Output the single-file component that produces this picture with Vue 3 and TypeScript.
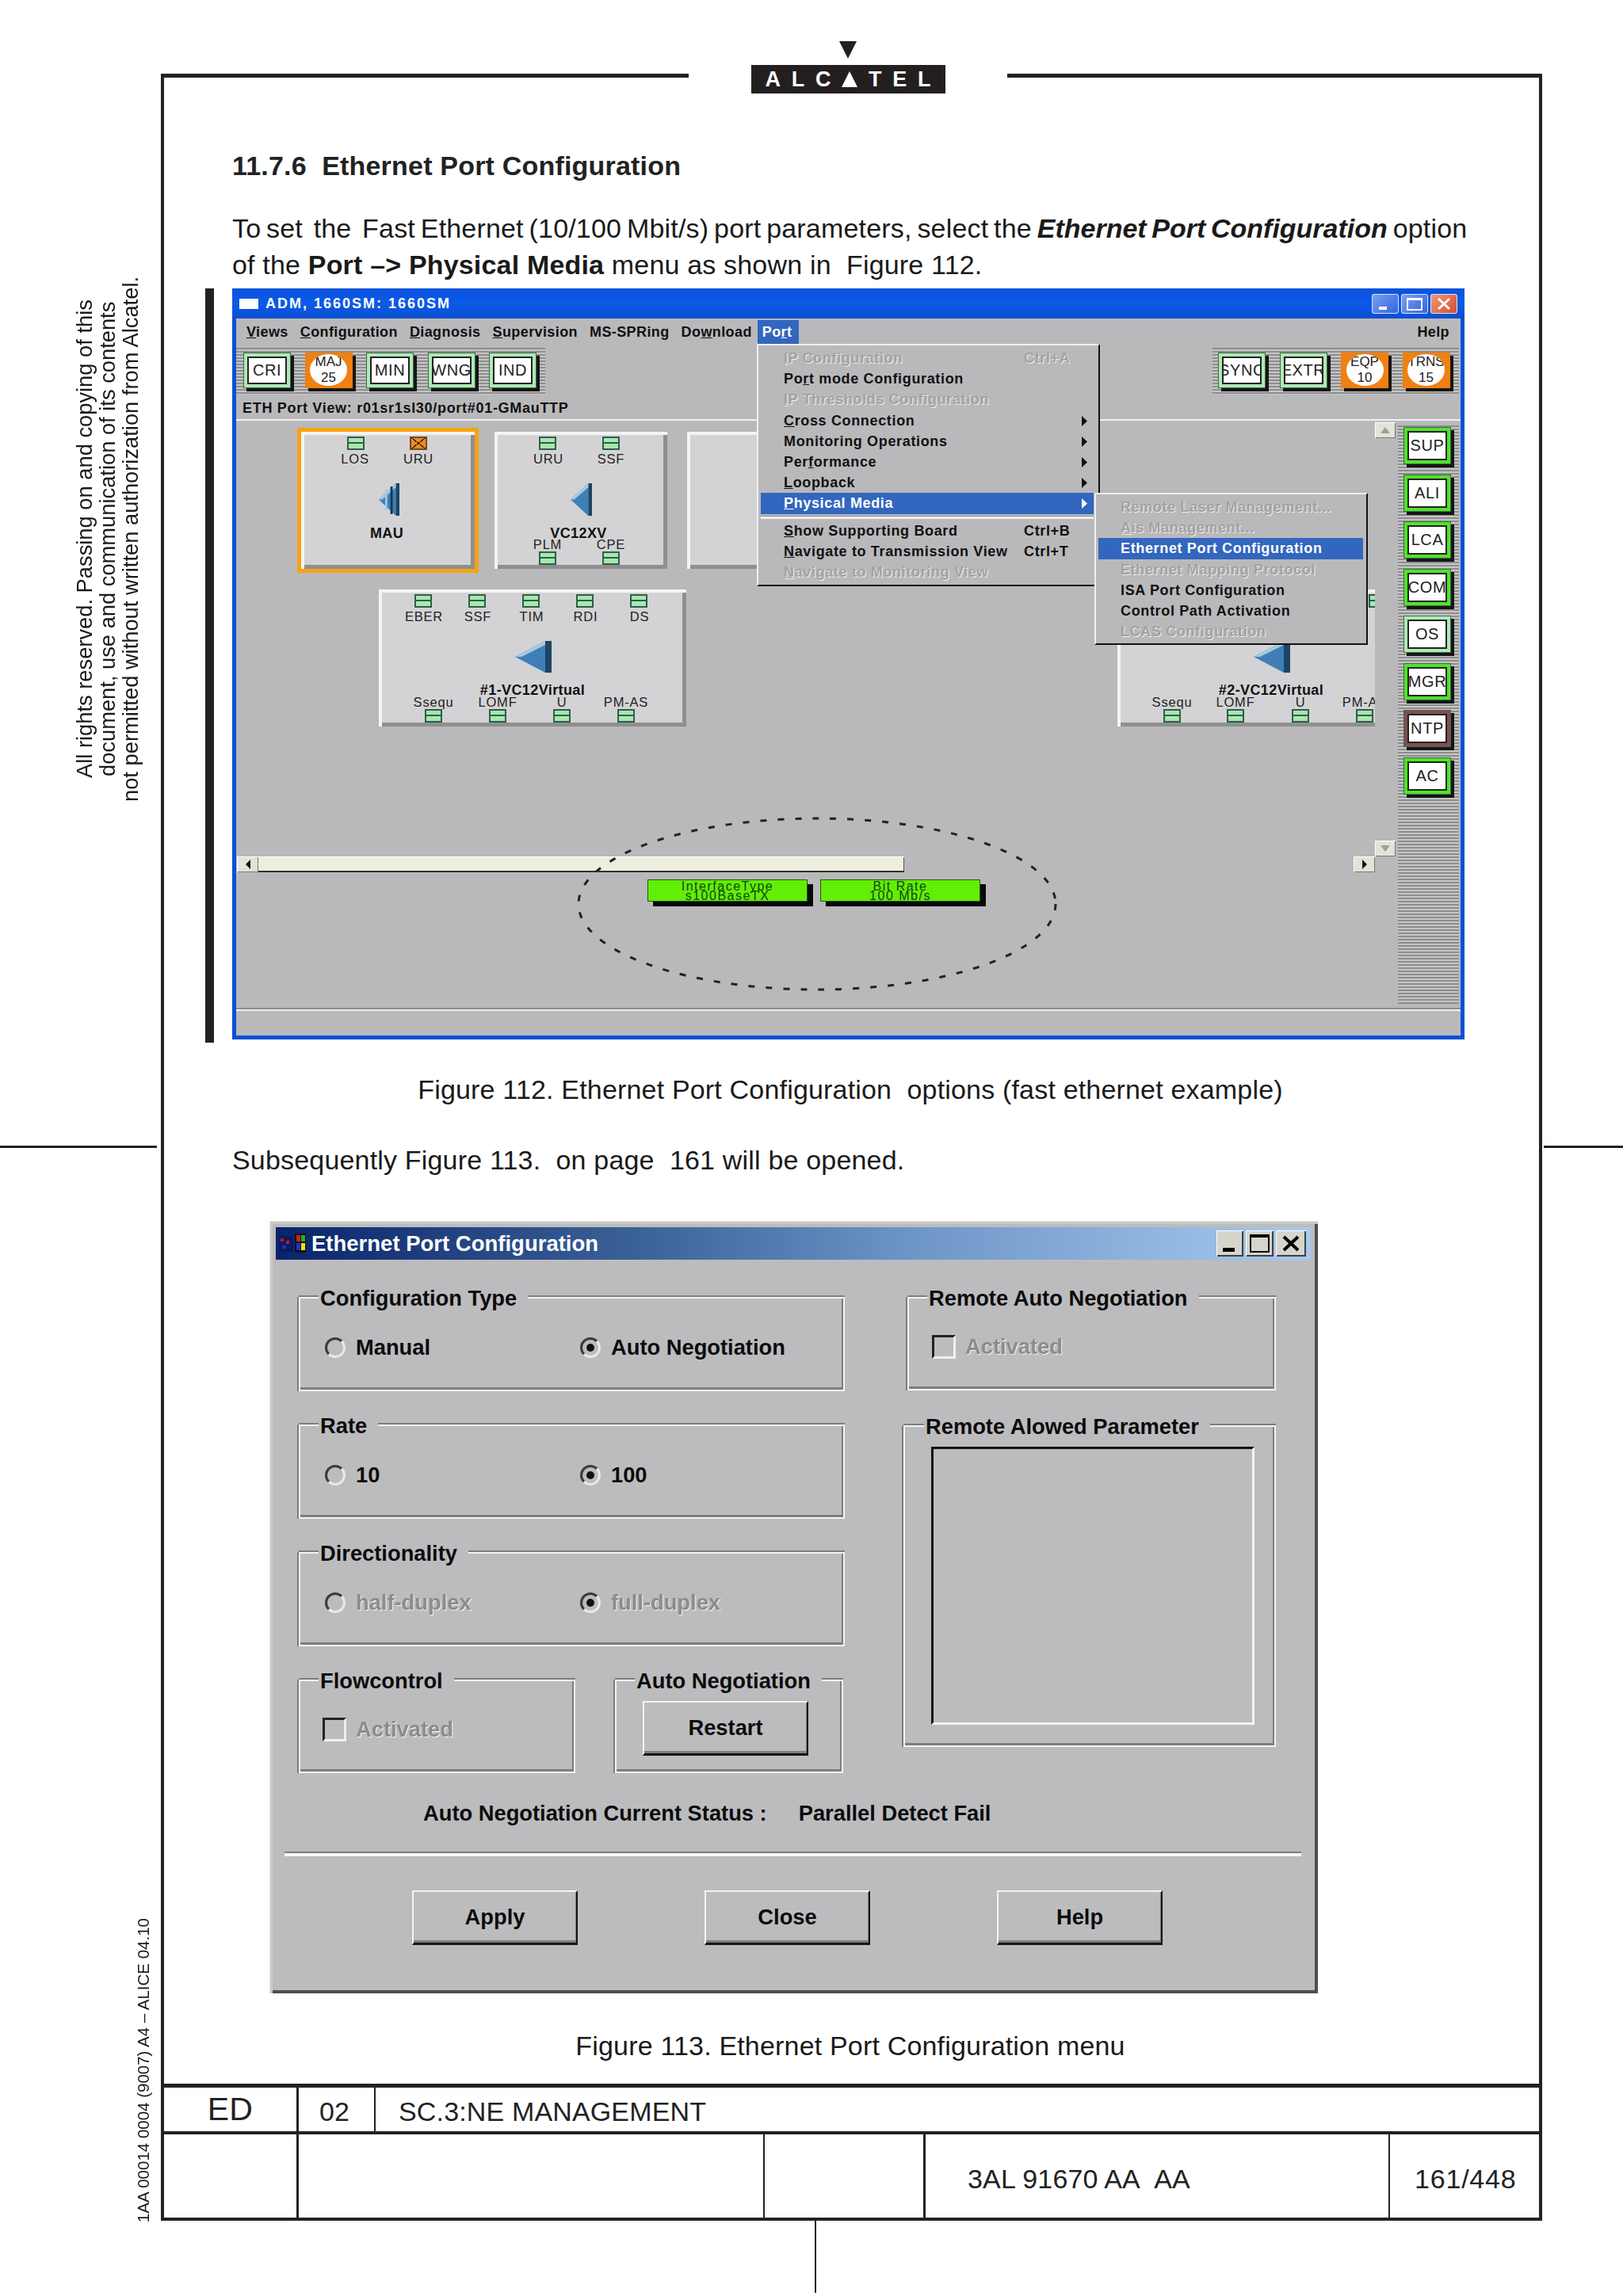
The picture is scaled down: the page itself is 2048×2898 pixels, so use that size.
<script setup lang="ts">
interface Tool {
  top: string
  bottom?: string
  tone: 'pale' | 'green' | 'brown' | 'alarm'
}

interface Lamp {
  x: number
  y: number
  alarm?: boolean
}

interface NodeText {
  t: string
  x: number
  y: number
  bold?: boolean
}

interface PortNode {
  x: number
  y: number
  w: number
  selected?: boolean
  arrow?: { x: number; y: number; w: number; h: number; stripes?: boolean }
  lamps: Lamp[]
  texts: NodeText[]
}

interface MenuRow {
  text: string
  u?: number
  key?: string
  sub?: boolean
  off?: boolean
  active?: boolean
  line?: boolean
}

const leftTools: Tool[] = [
  { top: 'CRI', tone: 'pale' },
  { top: 'MAJ', bottom: '25', tone: 'alarm' },
  { top: 'MIN', tone: 'pale' },
  { top: 'WNG', tone: 'pale' },
  { top: 'IND', tone: 'pale' },
]

const rightTools: Tool[] = [
  { top: 'SYNC', tone: 'pale' },
  { top: 'EXTR', tone: 'pale' },
  { top: 'EQP', bottom: '10', tone: 'alarm' },
  { top: 'TRNS', bottom: '15', tone: 'alarm' },
]

const sideTools: Tool[] = [
  { top: 'SUP', tone: 'green' },
  { top: 'ALI', tone: 'green' },
  { top: 'LCA', tone: 'green' },
  { top: 'COM', tone: 'green' },
  { top: 'OS', tone: 'pale' },
  { top: 'MGR', tone: 'green' },
  { top: 'NTP', tone: 'brown' },
  { top: 'AC', tone: 'green' },
]

const menuBar = [
  { text: 'Views', u: 0 },
  { text: 'Configuration', u: 0 },
  { text: 'Diagnosis', u: 0 },
  { text: 'Supervision', u: 0 },
  { text: 'MS-SPRing', u: -1 },
  { text: 'Download', u: 2 },
]

const portMenu: MenuRow[] = [
  { text: 'IP Configuration', u: 0, key: 'Ctrl+A', off: true },
  { text: 'Port mode Configuration', u: 2 },
  { text: 'IP Thresholds Configuration', u: 0, off: true },
  { text: 'Cross Connection', u: 0, sub: true },
  { text: 'Monitoring Operations', sub: true },
  { text: 'Performance', u: 3, sub: true },
  { text: 'Loopback', u: 0, sub: true },
  { text: 'Physical Media', u: 0, sub: true, active: true, line: true },
  { text: 'Show Supporting Board', u: 0, key: 'Ctrl+B' },
  { text: 'Navigate to Transmission View', u: 0, key: 'Ctrl+T' },
  { text: 'Navigate to Monitoring View', u: 0, off: true },
]

const mediaMenu: MenuRow[] = [
  { text: 'Remote Laser Management...', off: true },
  { text: 'Ais Management...', u: 0, off: true },
  { text: 'Ethernet Port Configuration', active: true },
  { text: 'Ethernet Mapping Protocol', off: true },
  { text: 'ISA Port Configuration' },
  { text: 'Control Path Activation' },
  { text: 'LCAS Configuration', off: true },
]

// coordinates below are page pixels, the viewport starts at 299,532
const nodes: PortNode[] = [
  {
    x: 381,
    y: 546,
    w: 219,
    selected: true,
    arrow: { x: 479, y: 611, w: 26, h: 41, stripes: true },
    lamps: [
      { x: 450, y: 552 },
      { x: 529, y: 552, alarm: true },
    ],
    texts: [
      { t: 'LOS', x: 449, y: 580 },
      { t: 'URU', x: 529, y: 580 },
      { t: 'MAU', x: 489, y: 674, bold: true },
    ],
  },
  {
    x: 625,
    y: 546,
    w: 218,
    arrow: { x: 721, y: 611, w: 27, h: 41 },
    lamps: [
      { x: 692, y: 552 },
      { x: 772, y: 552 },
      { x: 692, y: 697 },
      { x: 772, y: 697 },
    ],
    texts: [
      { t: 'URU', x: 693, y: 580 },
      { t: 'SSF', x: 772, y: 580 },
      { t: 'VC12XV', x: 731, y: 674, bold: true },
      { t: 'PLM', x: 692, y: 688 },
      { t: 'CPE', x: 772, y: 688 },
    ],
  },
  { x: 868, y: 546, w: 218, lamps: [], texts: [] },
  {
    x: 479,
    y: 745,
    w: 388,
    arrow: { x: 651, y: 810, w: 46, h: 40 },
    lamps: [
      { x: 535, y: 751 },
      { x: 603, y: 751 },
      { x: 671, y: 751 },
      { x: 739, y: 751 },
      { x: 807, y: 751 },
      { x: 548, y: 896 },
      { x: 629, y: 896 },
      { x: 710, y: 896 },
      { x: 791, y: 896 },
    ],
    texts: [
      { t: 'EBER', x: 536, y: 779 },
      { t: 'SSF', x: 604, y: 779 },
      { t: 'TIM', x: 672, y: 779 },
      { t: 'RDI', x: 740, y: 779 },
      { t: 'DS', x: 808, y: 779 },
      { t: '#1-VC12Virtual', x: 673, y: 872, bold: true },
      { t: 'Ssequ', x: 548, y: 887 },
      { t: 'LOMF', x: 629, y: 887 },
      { t: 'U', x: 710, y: 887 },
      { t: 'PM-AS', x: 791, y: 887 },
    ],
  },
  {
    x: 1411,
    y: 745,
    w: 388,
    arrow: { x: 1583, y: 810, w: 46, h: 40 },
    lamps: [
      { x: 1739, y: 751 },
      { x: 1480, y: 896 },
      { x: 1560, y: 896 },
      { x: 1642, y: 896 },
      { x: 1723, y: 896 },
    ],
    texts: [
      { t: '#2-VC12Virtual', x: 1605, y: 872, bold: true },
      { t: 'Ssequ', x: 1480, y: 887 },
      { t: 'LOMF', x: 1560, y: 887 },
      { t: 'U', x: 1642, y: 887 },
      { t: 'PM-AS', x: 1723, y: 887 },
    ],
  },
]

const radioGroups = [
  { title: 'Configuration Type', a: 'Manual', b: 'Auto Negotiation', off: false },
  { title: 'Rate', a: '10', b: '100', off: false },
  { title: 'Directionality', a: 'half-duplex', b: 'full-duplex', off: true },
]

function parts(text: string, u = -1) {
  if (u < 0) return [text, '', '']
  return [text.slice(0, u), text.charAt(u), text.slice(u + 1)]
}

function nodeBox(n: PortNode) {
  return { left: `${n.x - 299}px`, top: `${n.y - 532}px`, width: `${n.w}px` }
}

function inNode(n: PortNode, x: number, y: number) {
  return { left: `${x - n.x}px`, top: `${y - n.y}px` }
}
</script>

<template>
  <div class="page">
    <aside class="margin-left">
      <div class="rights">
        All rights reserved. Passing on and copying of this<br />
        document, use and communication of its contents<br />
        not permitted without written authorization from Alcatel.
      </div>
      <div class="tick tick-left"></div>
      <div class="doc-id">1AA 00014 0004 (9007) A4 – ALICE 04.10</div>
    </aside>

    <div class="sheet">
      <div class="frame">
        <div class="logo">
          <svg width="22" height="22" viewBox="0 0 22 22"><polygon points="0,0 22,0 11,22" fill="#231f20" /></svg>
          <div class="logo-box">
            <span>A</span><span>L</span><span>C</span><i class="logo-tri"></i><span>T</span><span>E</span><span>L</span>
          </div>
        </div>

        <div class="content">
          <h2 class="heading">11.7.6&nbsp; Ethernet Port Configuration</h2>
          <p class="para">
            <span class="line-one">To set&nbsp; the&nbsp; Fast Ethernet (10/100 Mbit/s) port parameters, select the <b><i>Ethernet Port Configuration</i></b> option</span><br />
            of the <b>Port –&gt; Physical Media</b> menu as shown in&nbsp; Figure 112.
          </p>

          <div class="figure-row">
            <div class="change-bar"></div>
            <div class="xp-window">
              <div class="xp-title">
                <span class="xp-icon"></span>
                <span class="xp-caption">ADM, 1660SM: 1660SM</span>
                <span class="xp-btns">
                  <span class="xp-btn">
                    <svg width="34" height="25" viewBox="0 0 34 25"><rect x="9" y="16" width="10" height="4" fill="#fff" /></svg>
                  </span>
                  <span class="xp-btn">
                    <svg width="34" height="25" viewBox="0 0 34 25"><rect x="8" y="6" width="18" height="14" fill="none" stroke="#fff" stroke-width="2" /><rect x="8" y="5" width="18" height="3" fill="#fff" /></svg>
                  </span>
                  <span class="xp-btn xp-close">
                    <svg width="34" height="25" viewBox="0 0 34 25"><path d="M10 6 L24 19 M24 6 L10 19" stroke="#fff" stroke-width="3" /></svg>
                  </span>
                </span>
              </div>

              <div class="menubar">
                <span v-for="m in menuBar" :key="m.text" class="menu-item">{{ parts(m.text, m.u)[0] }}<u>{{ parts(m.text, m.u)[1] }}</u>{{ parts(m.text, m.u)[2] }}</span>
                <span class="menu-port">Po<u>r</u>t</span>
                <span class="menu-help">Help</span>
              </div>

              <div class="tool-row">
                <div class="tools tools-left">
                  <div v-for="b in leftTools" :key="b.top" class="tool" :class="b.tone">
                    <span class="tool-face">{{ b.top }}<template v-if="b.bottom"><br />{{ b.bottom }}</template></span>
                  </div>
                </div>
                <div class="tools tools-right">
                  <div v-for="b in rightTools" :key="b.top" class="tool" :class="b.tone">
                    <span class="tool-face">{{ b.top }}<template v-if="b.bottom"><br />{{ b.bottom }}</template></span>
                  </div>
                </div>
              </div>

              <div class="view-label">ETH Port View: r01sr1sl30/port#01-GMauTTP</div>

              <div class="work">
                <div class="canvas">
                  <div class="pane">
                    <div class="viewport">
                      <div
                        v-for="n in nodes"
                        :key="n.x"
                        class="node"
                        :class="{ selected: n.selected }"
                        :style="nodeBox(n)"
                      >
                        <span
                          v-for="l in n.lamps"
                          :key="`${l.x}-${l.y}`"
                          class="lamp"
                          :class="{ alarm: l.alarm }"
                          :style="inNode(n, l.x, l.y)"
                        ></span>
                        <span
                          v-for="t in n.texts"
                          :key="t.t"
                          class="node-text"
                          :class="{ bold: t.bold }"
                          :style="inNode(n, t.x, t.y)"
                          >{{ t.t }}</span
                        >
                        <svg
                          v-if="n.arrow"
                          class="arrow"
                          :style="inNode(n, n.arrow.x, n.arrow.y)"
                          :width="n.arrow.w"
                          :height="n.arrow.h"
                          viewBox="0 0 46 40"
                          preserveAspectRatio="none"
                        >
                          <polygon points="0,20 38,0 38,40" fill="#3f7fb5" />
                          <polygon points="38,0 46,0 46,40 38,40" fill="#1c4464" />
                          <polygon points="0,20 38,0 38,5 8,20" fill="#a8c8e0" />
                          <template v-if="n.arrow.stripes">
                            <rect x="14" y="8" width="5" height="25" fill="#a8c8e0" />
                            <rect x="26" y="4" width="5" height="34" fill="#17364f" />
                          </template>
                        </svg>
                      </div>
                    </div>
                    <div class="vscroll">
                      <span class="sbtn up">
                        <svg width="12" height="8" viewBox="0 0 12 8"><polygon points="6,0 12,8 0,8" fill="#a0a090" /></svg>
                      </span>
                      <span class="sbtn down">
                        <svg width="12" height="8" viewBox="0 0 12 8"><polygon points="0,0 12,0 6,8" fill="#a0a090" /></svg>
                      </span>
                    </div>
                  </div>

                  <div class="hscroll">
                    <span class="sbtn small">
                      <svg width="6" height="12" viewBox="0 0 6 12"><polygon points="6,0 6,12 0,6" fill="#111" /></svg>
                    </span>
                    <span class="thumb"></span>
                    <span class="sbtn small end">
                      <svg width="6" height="12" viewBox="0 0 6 12"><polygon points="0,0 6,6 0,12" fill="#111" /></svg>
                    </span>
                  </div>

                  <div class="chips">
                    <div class="chip">InterfaceType<br />s100BaseTX</div>
                    <div class="chip">Bit Rate<br />100 Mb/s</div>
                  </div>

                  <svg class="ring" width="620" height="230" viewBox="0 0 620 230">
                    <ellipse cx="310" cy="115" rx="301" ry="108" fill="none" stroke="#222" stroke-width="3" stroke-dasharray="8 14" />
                  </svg>
                </div>

                <div class="side-tools">
                  <div v-for="b in sideTools" :key="b.top" class="tool tall" :class="b.tone">
                    <span class="tool-face">{{ b.top }}</span>
                  </div>
                </div>
              </div>

              <div class="status"></div>

              <div class="popup port-menu">
                <template v-for="r in portMenu" :key="r.text">
                  <div class="row" :class="{ off: r.off, active: r.active }">
                    <span class="row-text">{{ parts(r.text, r.u)[0] }}<u>{{ parts(r.text, r.u)[1] }}</u>{{ parts(r.text, r.u)[2] }}</span>
                    <span v-if="r.key" class="row-key">{{ r.key }}</span>
                    <svg v-if="r.sub" class="row-sub" width="7" height="13" viewBox="0 0 7 13"><polygon points="0,0 7,6.5 0,13" :fill="r.active ? '#fff' : '#111'" /></svg>
                  </div>
                  <div v-if="r.line" class="row-line"></div>
                </template>
              </div>

              <div class="popup media-menu">
                <div v-for="r in mediaMenu" :key="r.text" class="row" :class="{ off: r.off, active: r.active }">
                  <span class="row-text">{{ parts(r.text, r.u)[0] }}<u>{{ parts(r.text, r.u)[1] }}</u>{{ parts(r.text, r.u)[2] }}</span>
                </div>
              </div>
            </div>
          </div>

          <p class="caption cap-112">Figure 112. Ethernet Port Configuration&nbsp; options (fast ethernet example)</p>
          <p class="para after">Subsequently Figure 113.&nbsp; on page&nbsp; 161 will be opened.</p>

          <div class="dialog">
            <div class="dlg-title">
              <svg class="dlg-icon" width="36" height="28" viewBox="0 0 36 28">
                <rect x="0" y="4" width="18" height="20" fill="#0a1a60" />
                <rect x="2" y="7" width="4" height="4" fill="#c01830" />
                <rect x="9" y="10" width="4" height="4" fill="#c01830" />
                <rect x="4" y="16" width="5" height="4" fill="#1830d0" />
                <rect x="20" y="1" width="14" height="24" fill="#101010" />
                <rect x="22" y="3" width="5" height="8" fill="#d02020" />
                <rect x="28" y="3" width="5" height="8" fill="#20b030" />
                <rect x="22" y="13" width="5" height="9" fill="#2030d0" />
                <rect x="28" y="13" width="5" height="9" fill="#f0e020" />
              </svg>
              <span class="dlg-caption">Ethernet Port Configuration</span>
              <span class="dlg-btns">
                <span class="dlg-btn">
                  <svg width="34" height="33" viewBox="0 0 34 33"><rect x="8" y="22" width="15" height="5" fill="#000" /></svg>
                </span>
                <span class="dlg-btn">
                  <svg width="35" height="33" viewBox="0 0 35 33"><rect x="6" y="6" width="23" height="21" fill="none" stroke="#000" stroke-width="2" /><rect x="6" y="5" width="23" height="4" fill="#000" /></svg>
                </span>
                <span class="dlg-btn">
                  <svg width="38" height="33" viewBox="0 0 38 33"><path d="M10 8 L28 25 M28 8 L10 25" stroke="#000" stroke-width="4" /></svg>
                </span>
              </span>
            </div>

            <div class="dlg-body">
              <div class="dlg-left">
                <div v-for="g in radioGroups" :key="g.title" class="group radio-group">
                  <span class="legend">{{ g.title }}</span>
                  <div class="radio-cell">
                    <span class="radio"></span>
                    <span class="opt" :class="{ off: g.off }">{{ g.a }}</span>
                  </div>
                  <div class="radio-cell">
                    <span class="radio on"></span>
                    <span class="opt" :class="{ off: g.off }">{{ g.b }}</span>
                  </div>
                </div>
                <div class="group-pair">
                  <div class="group flow">
                    <span class="legend">Flowcontrol</span>
                    <span class="check"></span>
                    <span class="opt off">Activated</span>
                  </div>
                  <div class="group restart">
                    <span class="legend">Auto Negotiation</span>
                    <button class="w-btn" type="button">Restart</button>
                  </div>
                </div>
              </div>

              <div class="dlg-right">
                <div class="group remote-auto">
                  <span class="legend">Remote Auto Negotiation</span>
                  <span class="check"></span>
                  <span class="opt off">Activated</span>
                </div>
                <div class="group remote-params">
                  <span class="legend">Remote Alowed Parameter</span>
                  <div class="listbox"></div>
                </div>
              </div>
            </div>

            <div class="dlg-status">
              <span>Auto Negotiation Current Status :</span>
              <span>Parallel Detect Fail</span>
            </div>
            <div class="dlg-divider"></div>
            <div class="dlg-actions">
              <button class="w-btn" type="button">Apply</button>
              <button class="w-btn" type="button">Close</button>
              <button class="w-btn" type="button">Help</button>
            </div>
          </div>

          <p class="caption cap-113">Figure 113. Ethernet Port Configuration menu</p>
        </div>

        <div class="footer">
          <div class="foot-row foot-top">
            <div class="cell c-ed">ED</div>
            <div class="cell c-02">02</div>
            <div class="cell c-sc">SC.3:NE MANAGEMENT</div>
          </div>
          <div class="foot-row foot-bottom">
            <div class="cell b1"></div>
            <div class="cell b2"></div>
            <div class="cell b3"></div>
            <div class="cell b4">3AL 91670 AA&nbsp; AA</div>
            <div class="cell b5">161/448</div>
          </div>
        </div>
      </div>
      <div class="stem"></div>
    </div>

    <aside class="margin-right">
      <div class="tick tick-right"></div>
    </aside>
  </div>
</template>

<style>
html,
body {
  margin: 0;
  background: #fff;
}
</style>

<style scoped>
.page {
  display: flex;
  width: 2048px;
  height: 2898px;
  overflow: hidden;
  background: #fff;
  color: #1a1a1a;
  font-family: 'Liberation Sans', Arial, sans-serif;
}

.margin-left {
  width: 203px;
  flex: none;
  display: flex;
  flex-direction: column;
  padding-top: 340px;
  box-sizing: border-box;
}

.rights {
  writing-mode: vertical-rl;
  transform: rotate(180deg);
  height: 680px;
  margin-left: 92px;
  width: 87px;
  font-size: 27.3px;
  line-height: 29px;
  text-align: center;
  white-space: nowrap;
}

.tick {
  height: 3px;
  background: #222;
}

.tick-left {
  margin-top: 426px;
  width: 198px;
}

.doc-id {
  margin-top: auto;
  margin-bottom: 93px;
  margin-left: 169px;
  writing-mode: vertical-rl;
  transform: rotate(180deg);
  font-size: 20.5px;
  line-height: 24px;
  white-space: nowrap;
  width: 24px;
}

.margin-right {
  flex: 1;
  padding-top: 1446px;
}

.tick-right {
  margin-left: 2px;
}

.sheet {
  width: 1743px;
  flex: none;
  display: flex;
  flex-direction: column;
  padding-top: 93px;
}

.frame {
  position: relative;
  height: 2710px;
  flex: none;
  box-sizing: border-box;
  border: 4px solid #222;
  border-top-width: 5px;
  display: flex;
  flex-direction: column;
}

.stem {
  width: 2px;
  height: 91px;
  margin-left: 825px;
  background: #222;
}

.logo {
  position: absolute;
  left: 662px;
  top: -46px;
  width: 402px;
  height: 86px;
  background: linear-gradient(transparent 0 30px, #fff 30px);
  display: flex;
  flex-direction: column;
  align-items: center;
  gap: 8px;
}

.logo-box {
  width: 245px;
  height: 36px;
  box-sizing: border-box;
  padding: 0 18px;
  background: #231f20;
  color: #fff;
  display: flex;
  align-items: center;
  justify-content: space-between;
  font-size: 27px;
  font-weight: 700;
  line-height: 36px;
}

.logo-tri {
  width: 0;
  height: 0;
  border-left: 10px solid transparent;
  border-right: 10px solid transparent;
  border-bottom: 20px solid #fff;
}

.content {
  flex: 1;
  padding: 88px 89px 0 86px;
}

.heading {
  margin: 0;
  font-size: 34px;
  line-height: 46px;
  font-weight: 700;
  letter-spacing: 0.2px;
  color: #222;
}

.para {
  margin: 33px 0 0;
  font-size: 34px;
  line-height: 46px;
  letter-spacing: 0.18px;
  white-space: nowrap;
}

.line-one {
  word-spacing: -2.8px;
}

.line-one b {
  letter-spacing: 0;
}

.figure-row {
  display: flex;
  margin-top: 7px;
}

.change-bar {
  width: 11px;
  height: 952px;
  margin-left: -34px;
  margin-right: 23px;
  background: #222;
  flex: none;
}

.xp-window {
  position: relative;
  width: 1555px;
  height: 948px;
  box-sizing: border-box;
  border: 5px solid #0a4fd8;
  border-top: none;
  background: #b9b9bb;
  color: #111;
  display: flex;
  flex-direction: column;
  font-size: 18px;
}

.xp-title {
  height: 38px;
  flex: none;
  margin: 0 -5px;
  padding-left: 9px;
  display: flex;
  align-items: center;
  background: linear-gradient(#0a52dc, #0c5ae8 50%, #0a4fd0);
}

.xp-icon {
  width: 24px;
  height: 13px;
  background: #fff;
}

.xp-caption {
  margin-left: 9px;
  color: #fff;
  font-weight: 700;
  font-size: 18px;
  letter-spacing: 2px;
}

.xp-btns {
  margin-left: auto;
  margin-right: 9px;
  display: flex;
  gap: 3px;
}

.xp-btn {
  width: 34px;
  height: 25px;
  border-radius: 3px;
  box-sizing: border-box;
  outline: 1px solid #d8e4ff;
  outline-offset: -1px;
  background: linear-gradient(135deg, #7ea2f0, #2f62e0);
  display: block;
}

.xp-btn svg,
.dlg-btn svg {
  display: block;
}

.xp-close {
  background: linear-gradient(135deg, #f09a80, #d84a28);
}

.menubar {
  height: 37px;
  flex: none;
  padding-left: 13px;
  display: flex;
  align-items: flex-start;
  gap: 15px;
  font-weight: 700;
  line-height: 34px;
  letter-spacing: 0.4px;
}

.menu-port {
  margin: 2px 0 0 -8px;
  width: 52px;
  height: 30px;
  padding-left: 6px;
  box-sizing: border-box;
  line-height: 30px;
  color: #fff;
  background: #3366bf;
}

.menu-help {
  margin-left: auto;
  margin-right: 14px;
}

.tool-row {
  height: 59px;
  flex: none;
  display: flex;
  justify-content: space-between;
  padding-right: 2px;
}

.tools {
  height: 59px;
  display: flex;
  box-sizing: border-box;
  padding-top: 6px;
  background: repeating-linear-gradient(#8d8d8d 0 2px, #c6c6c6 2px 4px);
}

.tools-left {
  width: 390px;
  padding-left: 9px;
  gap: 17.5px;
}

.tools-right {
  width: 311px;
  padding-left: 7px;
  gap: 17.5px;
}

.tool {
  width: 60px;
  height: 45px;
  flex: none;
  box-sizing: border-box;
  border: 5px solid #b0e8b8;
  outline: 1px solid #3f6a46;
  outline-offset: -1px;
  box-shadow: 4px 4px 0 #151515, inset 0 0 0 2px #222;
  background: #fff;
  display: flex;
  align-items: center;
  justify-content: center;
  overflow: hidden;
  font-size: 20px;
  letter-spacing: 0.6px;
  font-weight: 400;
  color: #222;
  white-space: nowrap;
}

.tool-face {
  display: block;
  text-align: center;
}

.tool.green {
  border-color: #4fe32a;
}

.tool.brown {
  border-color: #7f4f50;
}

.tool.tall {
  height: 47px;
}

.tool.alarm {
  border: none;
  outline: none;
  box-shadow: 4px 4px 0 #151515;
  background: #f08012;
}

.tool.alarm .tool-face {
  width: 47px;
  height: 40px;
  overflow: hidden;
  border-radius: 50%;
  background: #fff;
  font-size: 17px;
  letter-spacing: 0;
  line-height: 20px;
  margin-top: -1px;
}

.view-label {
  height: 33px;
  flex: none;
  padding-left: 8px;
  font-weight: 700;
  font-size: 18px;
  letter-spacing: 0.7px;
  line-height: 34px;
  border-bottom: 2px solid #f0f0f0;
  box-sizing: border-box;
}

.work {
  height: 741px;
  flex: none;
  display: flex;
  padding-right: 2px;
}

.canvas {
  position: relative;
  width: 1466px;
  flex: none;
}

.pane {
  height: 550px;
  display: flex;
}

.viewport {
  position: relative;
  width: 1437px;
  height: 550px;
  overflow: hidden;
}

.node {
  position: absolute;
  height: 173px;
  background: #d3d3d5;
  box-shadow: inset 4px 4px 0 #f4f4f4, inset -5px -5px 0 #8f8f8f;
}

.node.selected {
  outline: 5px solid #f5a414;
}

.lamp {
  position: absolute;
  width: 22px;
  height: 17px;
  margin-left: -11px;
  box-sizing: border-box;
  border: 2px solid #2e5f48;
  background: linear-gradient(#a9e6b2 0 5px, #2e5f48 5px 7px, #a9e6b2 7px);
}

.lamp.alarm {
  border-color: #7a4a1a;
  background:
    linear-gradient(38deg, transparent 47%, #222 47% 53%, transparent 53%),
    linear-gradient(-38deg, transparent 47%, #222 47% 53%, transparent 53%),
    #f08a20;
}

.node-text {
  position: absolute;
  transform: translate(-50%, -50%);
  font-size: 16.5px;
  letter-spacing: 0.8px;
  white-space: nowrap;
  color: #222;
}

.node-text.bold {
  font-weight: 700;
  letter-spacing: 0.4px;
  color: #111;
  font-size: 18px;
}

.arrow {
  position: absolute;
}

.vscroll {
  width: 26px;
  display: flex;
  flex-direction: column;
  justify-content: space-between;
  padding-top: 2px;
  box-sizing: border-box;
}

.sbtn {
  height: 20px;
  box-sizing: border-box;
  background: #e3e3d8;
  box-shadow: inset 1px 1px 0 #fff, inset -1px -1px 0 #777;
  display: flex;
  align-items: center;
  justify-content: center;
}

.sbtn.small {
  width: 27px;
  flex: none;
}

.sbtn.end {
  margin-left: auto;
}

.hscroll {
  height: 20px;
  width: 1436px;
  margin-left: 1px;
  display: flex;
}

.thumb {
  width: 815px;
  background: #eeeede;
  box-shadow: inset 0 1px 0 #fff, inset 0 -2px 0 #333, inset -1px 0 0 #555;
}

.chips {
  display: flex;
  gap: 16px;
  padding: 9px 0 0 519px;
}

.chip {
  width: 202px;
  height: 28px;
  box-sizing: border-box;
  background: #62ee06;
  border: 1px solid #1e5a10;
  box-shadow: 7px 6px 0 #080808;
  text-align: center;
  font-size: 16px;
  line-height: 12px;
  padding-top: 2px;
  letter-spacing: 1.5px;
  color: #124412;
  white-space: nowrap;
}

.ring {
  position: absolute;
  left: 423px;
  top: 495px;
  pointer-events: none;
}

.side-tools {
  width: 77px;
  height: 730px;
  margin-top: 6px;
  box-sizing: border-box;
  padding: 2px 0 0 7px;
  display: flex;
  flex-direction: column;
  gap: 12.5px;
  background: repeating-linear-gradient(#8d8d8d 0 2px, #c6c6c6 2px 4px);
}

.status {
  flex: 1;
  border-top: 2px solid #8c8c8c;
  box-shadow: inset 0 2px 0 #f0f0f0;
}

.popup {
  position: absolute;
  box-sizing: border-box;
  background: #b9b9bb;
  border: 2px solid #111;
  border-top-color: #f0f0f0;
  border-left-color: #f0f0f0;
  font-weight: 700;
  letter-spacing: 0.65px;
}

.port-menu {
  left: 657px;
  top: 70px;
  width: 433px;
  height: 306px;
  padding: 3px 6px 0 3px;
}

.media-menu {
  left: 1083px;
  top: 258px;
  width: 345px;
  height: 192px;
  padding: 3px 4px 0 3px;
  z-index: 2;
}

.row {
  position: relative;
  height: 26.2px;
  line-height: 26px;
  padding-left: 29px;
  white-space: nowrap;
}

.media-menu .row {
  padding-left: 28px;
}

.row.active {
  background: #3366bf;
  color: #fff;
}

.row.off {
  color: #a2a2a2;
  text-shadow: 1px 1px 0 #f0f0f0;
}

.row-key {
  position: absolute;
  left: 332px;
  top: 0;
}

.row-sub {
  position: absolute;
  left: 405px;
  top: 7px;
}

.row-line {
  height: 4px;
  margin: 2px 0 2px;
  background: linear-gradient(#8c8c8c 0 1px, #f0f0f0 1px);
}

.caption {
  margin: 36px 0 0;
  text-align: center;
  font-size: 34px;
  line-height: 46px;
  letter-spacing: 0.18px;
  white-space: nowrap;
}

.para.after {
  margin-top: 43px;
}

.cap-113 {
  margin-top: 43px;
}

.dialog {
  width: 1323px;
  height: 975px;
  margin: 54px 0 0 47px;
  box-sizing: border-box;
  padding: 8px 9px 9px 8px;
  background: #bcbcbe;
  box-shadow: inset 1px 1px 0 #e4e4e0, inset 4px 4px 0 #c8c8c4, inset -4px -4px 0 #4e4e4e;
  color: #0c0c0c;
  display: flex;
  flex-direction: column;
  font-size: 27.3px;
}

.dlg-title {
  height: 41px;
  flex: none;
  display: flex;
  align-items: center;
  padding-left: 4px;
  background: linear-gradient(90deg, #0a246a, #3b6298 35%, #6f96c8 62%, #a6caf0);
}

.dlg-icon {
  flex: none;
}

.dlg-caption {
  margin-left: 5px;
  color: #fff;
  font-weight: 700;
  font-size: 27.5px;
}

.dlg-btns {
  margin-left: auto;
  margin-right: 6px;
  display: flex;
  gap: 3px;
}

.dlg-btn {
  height: 33px;
  background: #d6d5cc;
  box-shadow: inset 1px 1px 0 #fff, inset -2px -2px 0 #404040;
}

.dlg-body {
  display: flex;
  padding: 47px 0 0 29px;
}

.dlg-left {
  width: 689px;
  flex: none;
  display: flex;
  flex-direction: column;
  gap: 42px;
}

.dlg-right {
  width: 470px;
  margin-left: 74px;
  display: flex;
  flex-direction: column;
  gap: 44px;
  align-items: flex-end;
}

.group {
  position: relative;
  box-sizing: border-box;
  border: 2px solid #f4f4f4;
  box-shadow: 0 -2px 0 #7d7d7d, -2px 0 0 #7d7d7d, inset 0 -3px 0 #7d7d7d, inset -2px 0 0 #7d7d7d;
}

.legend {
  position: absolute;
  top: -15px;
  left: 23px;
  height: 30px;
  padding: 0 14px 0 2px;
  background: #bcbcbe;
  font-weight: 700;
  line-height: 30px;
  white-space: nowrap;
}

.radio-group {
  height: 119px;
  display: grid;
  grid-template-columns: 322px 1fr;
  padding: 48px 0 0 31px;
}

.radio-cell {
  display: flex;
  align-items: center;
  height: 28px;
}

.radio {
  width: 26px;
  height: 26px;
  flex: none;
  position: relative;
  box-sizing: border-box;
  border-radius: 50%;
  border: 3px solid;
  border-color: #3a3a3a #e8e8e8 #e8e8e8 #3a3a3a;
  margin-right: 13px;
}

.radio.on::after {
  content: '';
  position: absolute;
  left: 5px;
  top: 5px;
  width: 10px;
  height: 10px;
  border-radius: 50%;
  background: #111;
}

.opt {
  font-weight: 700;
  white-space: nowrap;
}

.opt.off {
  color: #8c8c8c;
  text-shadow: 1px 1px 0 #f4f4f4;
}

.group-pair {
  display: flex;
  gap: 50px;
}

.flow {
  width: 349px;
  height: 118px;
  display: flex;
  align-items: flex-start;
  padding: 46px 0 0 28px;
  gap: 12px;
  line-height: 30px;
}

.restart {
  width: 288px;
  height: 118px;
  padding: 25px 0 0 33px;
}

.check {
  width: 30px;
  height: 30px;
  flex: none;
  box-sizing: border-box;
  border: 3px solid;
  border-color: #222 #f0f0f0 #f0f0f0 #222;
  display: block;
}

.remote-auto {
  width: 465px;
  height: 118px;
  display: flex;
  padding: 46px 0 0 29px;
  gap: 12px;
  line-height: 30px;
}

.remote-params {
  width: 470px;
  height: 406px;
  padding: 25px 0 0 33px;
}

.remote-params .legend {
  left: 24px;
}

.listbox {
  width: 408px;
  height: 351px;
  box-sizing: border-box;
  border: 3px solid;
  border-color: #111 #f4f4f4 #f4f4f4 #111;
}

.w-btn {
  width: 209px;
  height: 69px;
  padding: 0;
  box-sizing: border-box;
  border: 2px solid;
  border-color: #f4f4f4 #151515 #151515 #f4f4f4;
  border-bottom-width: 3px;
  background: #bcbcbe;
  box-shadow: inset 0 -3px 0 #7d7d7d, inset -1px 0 0 #7d7d7d;
  font: 700 27.3px 'Liberation Sans', Arial, sans-serif;
  color: #0c0c0c;
}

.dlg-status {
  margin-top: 33px;
  height: 36px;
  padding-left: 186px;
  display: flex;
  gap: 40px;
  align-items: center;
  font-weight: 700;
  white-space: nowrap;
}

.dlg-divider {
  height: 6px;
  margin: 30px 12px 0 11px;
  background: linear-gradient(#7d7d7d 0 2px, #f6f6f6 2px);
}

.dlg-actions {
  display: flex;
  gap: 160px;
  margin-top: 43px;
  padding-left: 172px;
}

.footer {
  font-size: 34px;
  letter-spacing: 0.15px;
  flex: none;
  color: #222;
}

.foot-row {
  display: flex;
  border-top: 4px solid #222;
}

.foot-top {
  height: 60px;
  box-sizing: border-box;
  border-top-width: 5px;
}

.foot-bottom {
  height: 109px;
  box-sizing: border-box;
}

.cell {
  box-sizing: border-box;
  border-right: 2px solid #222;
  white-space: nowrap;
  display: flex;
  align-items: center;
}

.c-ed {
  width: 170px;
  justify-content: center;
  font-size: 41px;
  border-right-width: 3px;
}

.c-02 {
  width: 97px;
  padding: 6px 0 0 26px;
}

.c-sc {
  flex: 1;
  border-right: none;
  padding: 6px 0 0 29px;
}

.b1 {
  width: 170px;
  border-right-width: 3px;
}

.b2 {
  width: 588px;
}

.b3 {
  width: 203px;
  border-right-width: 3px;
}

.b4 {
  width: 586px;
  padding: 8px 0 0 53px;
}

.b5 {
  flex: 1;
  border-right: none;
  padding: 8px 0 0 31px;
  letter-spacing: 0.8px;
}
</style>
